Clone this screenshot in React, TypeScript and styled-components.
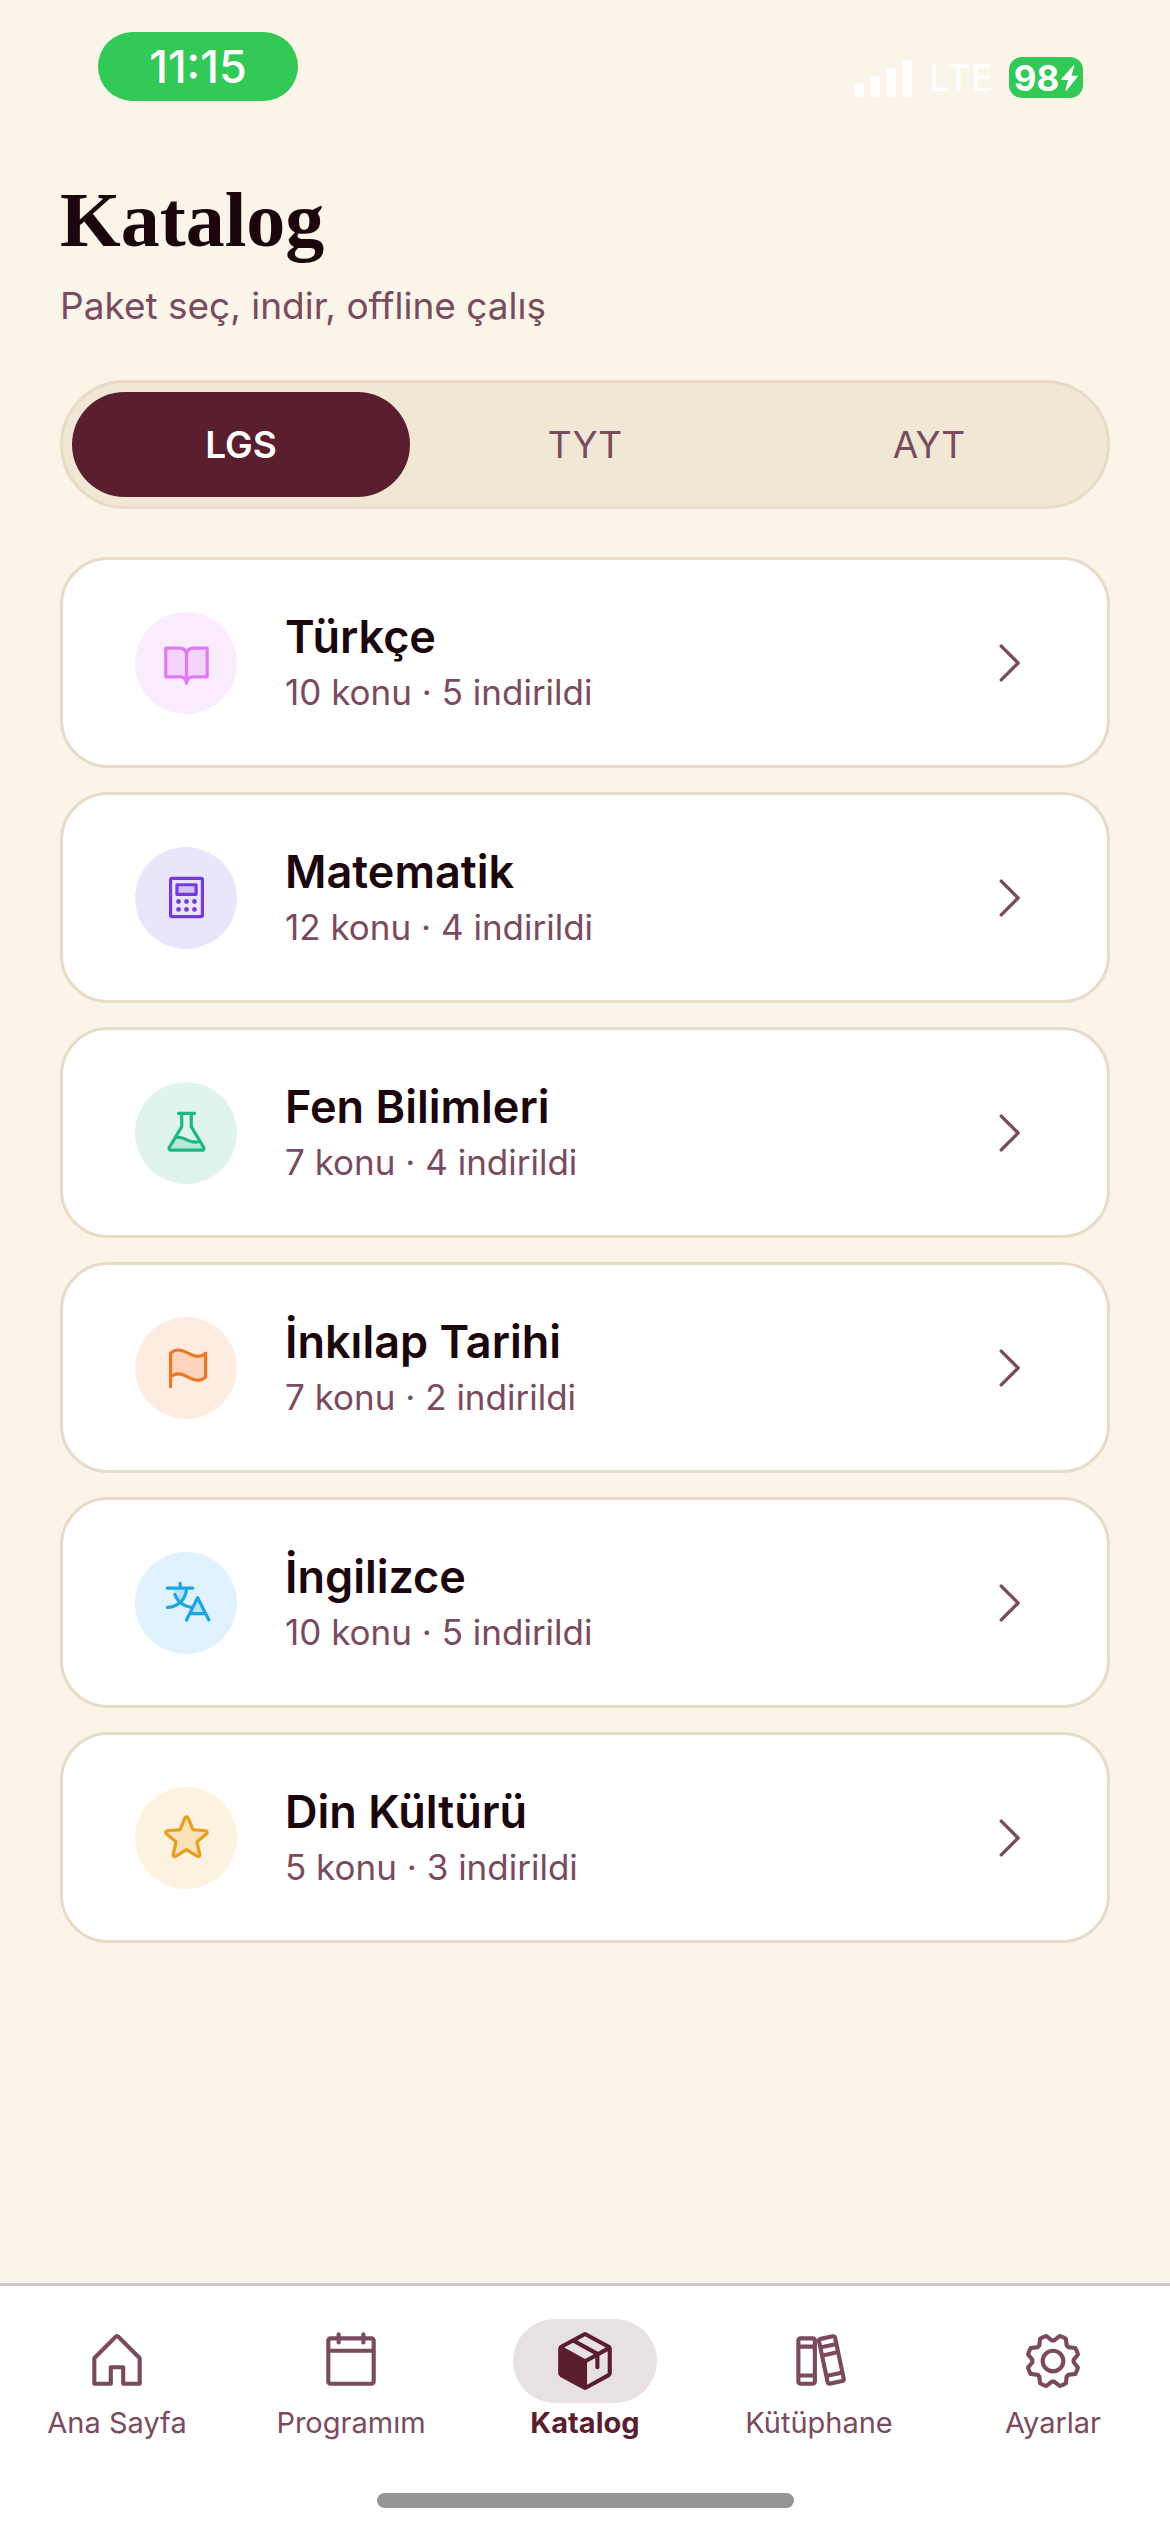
import { useState } from "react";
import styled, { createGlobalStyle } from "styled-components";
import type { IconType } from "react-icons";
import {
  PiBookOpenDuotone,
  PiBooks,
  PiCalculatorDuotone,
  PiCalendarBlank,
  PiCaretRight,
  PiFlagDuotone,
  PiFlaskDuotone,
  PiGear,
  PiHouse,
  PiPackageFill,
  PiStarDuotone,
  PiTranslateDuotone,
} from "react-icons/pi";

const GlobalStyle = createGlobalStyle`
  :root {
    --background: #faf5e8;
    --surface: #ffffff;
    --track: #f0e7d5;
    --border: #e8dbc8;
    --primary: #5a1e2e;
    --text: #1a060c;
    --muted: #7a4a5e;
    --green: #32c957;
  }

  * {
    box-sizing: border-box;
  }

  body {
    margin: 0;
    background-color: var(--background);
    color: var(--text);
    font-family: Inter, "Liberation Sans", sans-serif;
  }
`;

const Page = styled.div`
  display: flex;
  flex-direction: column;
  min-height: 100vh;
`;

const StatusBar = styled.header`
  display: flex;
  justify-content: space-between;
  align-items: flex-start;
  height: 144px;
  padding: 32px 87px 0 98px;
  color: white;
`;

const Clock = styled.time`
  display: flex;
  align-items: center;
  justify-content: center;
  width: 200px;
  height: 69px;

  background-color: var(--green);
  border-radius: 35px;
  font-size: 45px;
  font-weight: 500;
`;

const StatusIcons = styled.div`
  display: flex;
  align-items: center;
  gap: 16px;
  padding-top: 25px;
`;

const Network = styled.span`
  font-size: 37px;
  font-weight: 500;
  line-height: 41px;
`;

const Battery = styled.span`
  display: flex;
  align-items: center;
  justify-content: center;
  gap: 2px;
  width: 74px;
  height: 41px;

  background-color: var(--green);
  border-radius: 13px;
  font-size: 35px;
  font-weight: 700;
`;

const Content = styled.main`
  display: flex;
  flex: 1;
  flex-direction: column;
  padding: 28px 60px 60px;
`;

const Title = styled.h1`
  margin: 0;
  font-family: "Liberation Serif", serif;
  font-size: 78px;
  font-weight: 700;
  line-height: 96px;
`;

const Subtitle = styled.p`
  margin: 12px 0 49px;
  font-size: 37px;
  line-height: 51px;
  color: var(--muted);
`;

const Segments = styled.div`
  display: grid;
  grid-template-columns: repeat(3, 1fr);
  gap: 6px;
  padding: 9px;

  background-color: var(--track);
  border: 3px solid var(--border);
  border-radius: 66px;
`;

const Segment = styled.button<{ $active: boolean }>`
  height: 105px;
  border: none;
  border-radius: 54px;

  background-color: ${({ $active }) =>
    $active ? "var(--primary)" : "transparent"};
  color: ${({ $active }) => ($active ? "white" : "var(--muted)")};
  font-family: inherit;
  font-size: 37px;
  font-weight: ${({ $active }) => ($active ? 600 : 400)};
`;

const SubjectList = styled.ul`
  display: flex;
  flex-direction: column;
  gap: 24px;
  margin: 48px 0 0;
  padding: 0;
  list-style: none;
`;

const SubjectCard = styled.a`
  display: flex;
  align-items: center;
  gap: 48px;
  height: 211px;
  padding: 0 72px;

  background-color: var(--surface);
  border: 3px solid var(--border);
  border-radius: 48px;
  color: inherit;
  text-decoration: none;
`;

const SubjectIcon = styled.span<{ $color: string; $tint: string }>`
  display: flex;
  align-items: center;
  justify-content: center;
  width: 102px;
  height: 102px;

  background-color: ${({ $tint }) => $tint};
  border-radius: 50%;
  color: ${({ $color }) => $color};
  font-size: 51px;
`;

const SubjectText = styled.div`
  flex: 1;
`;

const SubjectName = styled.h2`
  margin: 0;
  font-size: 45px;
  font-weight: 600;
  line-height: 60px;
`;

const SubjectInfo = styled.p`
  margin: 0;
  font-size: 35px;
  line-height: 51px;
  color: var(--muted);
`;

const Chevron = styled(PiCaretRight)`
  font-size: 54px;
  color: var(--muted);
`;

const TabBar = styled.footer`
  display: flex;
  flex-direction: column;
  align-items: center;
  gap: 51px;
  padding: 33px 0 24px;

  background-color: var(--surface);
  border-top: 3px solid #d4c3c9;
`;

const Tabs = styled.nav`
  display: grid;
  grid-template-columns: repeat(5, 1fr);
  width: 100%;
`;

const Tab = styled.a<{ $active: boolean }>`
  display: flex;
  flex-direction: column;
  align-items: center;

  color: ${({ $active }) => ($active ? "var(--primary)" : "var(--muted)")};
  font-size: 29px;
  font-weight: ${({ $active }) => ($active ? 700 : 400)};
  line-height: 39px;
  text-decoration: none;
`;

const TabIcon = styled.span<{ $active: boolean }>`
  display: flex;
  align-items: center;
  justify-content: center;
  width: 144px;
  height: 84px;

  background-color: ${({ $active }) => ($active ? "#e8e1e4" : "transparent")};
  border-radius: 42px;
  font-size: 66px;
`;

const HomeIndicator = styled.div`
  width: 417px;
  height: 15px;
  background-color: #959595;
  border-radius: 8px;
`;

interface Subject {
  name: string;
  topics: number;
  downloaded: number;
  icon: IconType;
  color: string;
  tint: string;
}

const subjects: Subject[] = [
  {
    name: "Türkçe",
    topics: 10,
    downloaded: 5,
    icon: PiBookOpenDuotone,
    color: "#e079f2",
    tint: "#faecfe",
  },
  {
    name: "Matematik",
    topics: 12,
    downloaded: 4,
    icon: PiCalculatorDuotone,
    color: "#743bda",
    tint: "#ebe5fc",
  },
  {
    name: "Fen Bilimleri",
    topics: 7,
    downloaded: 4,
    icon: PiFlaskDuotone,
    color: "#1fb585",
    tint: "#def4ec",
  },
  {
    name: "İnkılap Tarihi",
    topics: 7,
    downloaded: 2,
    icon: PiFlagDuotone,
    color: "#ee7623",
    tint: "#feece1",
  },
  {
    name: "İngilizce",
    topics: 10,
    downloaded: 5,
    icon: PiTranslateDuotone,
    color: "#1da5e2",
    tint: "#dff2fd",
  },
  {
    name: "Din Kültürü",
    topics: 5,
    downloaded: 3,
    icon: PiStarDuotone,
    color: "#ea9f1c",
    tint: "#fdf2df",
  },
];

const exams = ["LGS", "TYT", "AYT"];

const tabs: { label: string; icon: IconType }[] = [
  { label: "Ana Sayfa", icon: PiHouse },
  { label: "Programım", icon: PiCalendarBlank },
  { label: "Katalog", icon: PiPackageFill },
  { label: "Kütüphane", icon: PiBooks },
  { label: "Ayarlar", icon: PiGear },
];

const SignalIcon = () => (
  <svg width="59" height="38" viewBox="0 0 59 38" fill="white">
    <rect x="0" y="24" width="10" height="14" rx="3" />
    <rect x="16" y="17" width="10" height="21" rx="3" />
    <rect x="32" y="9" width="10" height="29" rx="3" />
    <rect x="48" y="1" width="10" height="37" rx="3" />
  </svg>
);

const BoltIcon = () => (
  <svg width="17" height="26" viewBox="0 0 17 26" fill="white">
    <path d="M12.4 0.4 L0.4 14 Q0 15 1 15 H7 L4.4 25 Q4.6 26 5.6 25.4 L16.6 11.8 Q17 10.8 16 10.8 H10.4 L13.4 1 Q13.2 0 12.4 0.4 Z" />
  </svg>
);

const App = () => {
  const [exam, setExam] = useState("LGS");

  return (
    <Page>
      <GlobalStyle />
      <StatusBar>
        <Clock>11:15</Clock>
        <StatusIcons>
          <SignalIcon />
          <Network>LTE</Network>
          <Battery>
            98
            <BoltIcon />
          </Battery>
        </StatusIcons>
      </StatusBar>
      <Content>
        <Title>Katalog</Title>
        <Subtitle>Paket seç, indir, offline çalış</Subtitle>
        <Segments>
          {exams.map((name) => (
            <Segment
              key={name}
              type="button"
              $active={name === exam}
              aria-pressed={name === exam}
              onClick={() => setExam(name)}
            >
              {name}
            </Segment>
          ))}
        </Segments>
        <SubjectList>
          {subjects.map(
            ({ name, topics, downloaded, icon: Icon, color, tint }) => (
              <li key={name}>
                <SubjectCard href="#">
                  <SubjectIcon $color={color} $tint={tint}>
                    <Icon />
                  </SubjectIcon>
                  <SubjectText>
                    <SubjectName>{name}</SubjectName>
                    <SubjectInfo>
                      {`${topics} konu · ${downloaded} indirildi`}
                    </SubjectInfo>
                  </SubjectText>
                  <Chevron />
                </SubjectCard>
              </li>
            )
          )}
        </SubjectList>
      </Content>
      <TabBar>
        <Tabs>
          {tabs.map(({ label, icon: Icon }) => (
            <Tab key={label} href="#" $active={label === "Katalog"}>
              <TabIcon $active={label === "Katalog"}>
                <Icon />
              </TabIcon>
              {label}
            </Tab>
          ))}
        </Tabs>
        <HomeIndicator />
      </TabBar>
    </Page>
  );
};

export default App;
